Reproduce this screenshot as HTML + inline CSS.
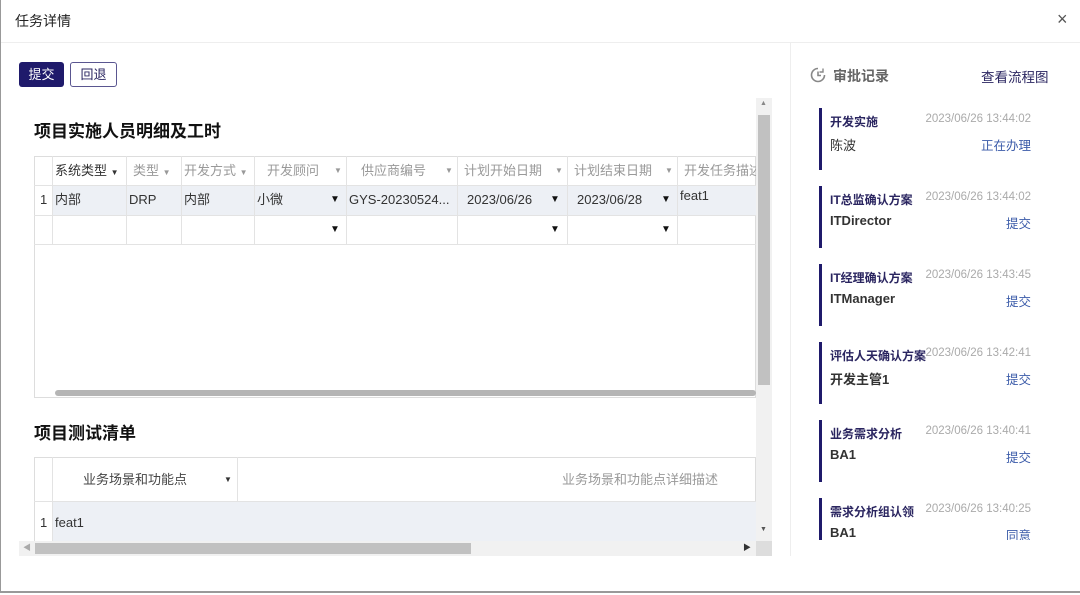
<!DOCTYPE html>
<html><head><meta charset="utf-8"><style>
*{box-sizing:border-box;margin:0;padding:0}
body{width:1080px;height:595px;background:#fff;font-family:"Liberation Sans","Noto Sans CJK SC",sans-serif;position:relative;overflow:hidden;color:#333}
.a{position:absolute}
.frame{left:0;top:0;width:1080px;height:593px;border-left:1px solid #999;border-bottom:2px solid #999}
.t{font-size:13px;white-space:nowrap}
.cell{position:absolute;font-size:13px;white-space:nowrap;line-height:29px}
.hd{color:#999}
.vl{position:absolute;width:1px;background:#e3e3e3}
.hz{position:absolute;height:1px;background:#e3e3e3}
.tri{font-size:10px;color:#111}
.rec{position:absolute;left:819px;width:212px;height:62px;border-left:3px solid #1f1a6b}
.rt{position:absolute;left:8px;top:5px;font-size:12px;font-weight:bold;color:#2a2560}
.rd{position:absolute;right:0;top:5px;font-size:11.5px;color:#aaa}
.rn{position:absolute;left:8px;top:27px;font-size:13px;font-weight:bold;color:#333}
.rs{position:absolute;right:0;top:27px;font-size:12.5px;color:#3b5ba9}
</style></head><body>
<div class="a frame"></div>
<div class="a t" style="left:15px;top:11px;font-size:14px;color:#222">任务详情</div>
<div class="a" style="left:1057px;top:9px;font-size:18px;color:#555">×</div>
<div class="a" style="left:1px;top:42px;width:1079px;height:1px;background:#eee"></div>
<div class="a" style="left:19px;top:62px;width:45px;height:25px;background:#1f1a6b;border-radius:3px;color:#fff;font-size:13px;text-align:center;line-height:25px">提交</div>
<div class="a" style="left:70px;top:62px;width:47px;height:25px;border:1px solid #5a5690;border-radius:3px;color:#2a2560;font-size:13px;text-align:center;line-height:23px">回退</div>

<div class="a t" style="left:34px;top:117px;font-size:17px;font-weight:bold;color:#111">项目实施人员明细及工时</div>
<div class="a" style="left:34px;top:156px;width:722px;height:242px;border:1px solid #ddd"></div>
<div class="a" style="left:52px;top:185px;width:704px;height:30px;background:#edf0f5"></div>
<div class="hz" style="left:34px;top:185px;width:722px"></div>
<div class="hz" style="left:34px;top:215px;width:722px"></div>
<div class="hz" style="left:34px;top:244px;width:722px"></div>
<div class="vl" style="left:52px;top:156px;height:88px"></div>
<div class="vl" style="left:126px;top:156px;height:88px"></div>
<div class="vl" style="left:181px;top:156px;height:88px"></div>
<div class="vl" style="left:254px;top:156px;height:88px"></div>
<div class="vl" style="left:346px;top:156px;height:88px"></div>
<div class="vl" style="left:457px;top:156px;height:88px"></div>
<div class="vl" style="left:567px;top:156px;height:88px"></div>
<div class="vl" style="left:677px;top:156px;height:88px"></div>
<div class="cell" style="left:55px;top:156px;color:#333">系统类型 <span style="font-size:8px">▼</span></div>
<div class="cell hd" style="left:133px;top:156px">类型 <span style="font-size:8px">▼</span></div>
<div class="cell hd" style="left:184px;top:156px">开发方式 <span style="font-size:8px">▼</span></div>
<div class="cell hd" style="left:267px;top:156px">开发顾问</div><div class="cell hd" style="left:334px;top:156px;font-size:8px">▼</div>
<div class="cell hd" style="left:361px;top:156px">供应商编号</div><div class="cell hd" style="left:445px;top:156px;font-size:8px">▼</div>
<div class="cell hd" style="left:464px;top:156px">计划开始日期</div><div class="cell hd" style="left:555px;top:156px;font-size:8px">▼</div>
<div class="cell hd" style="left:574px;top:156px">计划结束日期</div><div class="cell hd" style="left:665px;top:156px;font-size:8px">▼</div>
<div class="cell hd" style="left:684px;top:156px;width:72px;overflow:hidden">开发任务描述</div>
<div class="cell" style="left:40px;top:185px">1</div>
<div class="cell" style="left:55px;top:185px">内部</div>
<div class="cell" style="left:129px;top:185px">DRP</div>
<div class="cell" style="left:184px;top:185px">内部</div>
<div class="cell" style="left:257px;top:185px">小微</div><div class="cell tri" style="left:330px;top:185px">▼</div>
<div class="cell" style="left:349px;top:185px">GYS-20230524...</div>
<div class="cell" style="left:467px;top:185px">2023/06/26</div><div class="cell tri" style="left:550px;top:185px">▼</div>
<div class="cell" style="left:577px;top:185px">2023/06/28</div><div class="cell tri" style="left:661px;top:185px">▼</div>
<div class="cell" style="left:680px;top:181px">feat1</div>
<div class="cell tri" style="left:330px;top:215px">▼</div>
<div class="cell tri" style="left:550px;top:215px">▼</div>
<div class="cell tri" style="left:661px;top:215px">▼</div>
<div class="a" style="left:55px;top:390px;width:701px;height:6px;background:#b5b5b5;border-radius:3px"></div>

<div class="a t" style="left:34px;top:419px;font-size:17px;font-weight:bold;color:#111">项目测试清单</div>
<div class="a" style="left:34px;top:457px;width:722px;height:84px;border:1px solid #ddd;border-bottom:none"></div>
<div class="a" style="left:52px;top:501px;width:704px;height:40px;background:#edf0f5"></div>
<div class="hz" style="left:34px;top:501px;width:722px"></div>
<div class="vl" style="left:52px;top:457px;height:84px"></div>
<div class="vl" style="left:237px;top:457px;height:44px"></div>
<div class="cell" style="left:83px;top:465px;color:#444">业务场景和功能点</div>
<div class="cell" style="left:224px;top:465px;font-size:8px">▼</div>
<div class="cell hd" style="left:562px;top:465px">业务场景和功能点详细描述</div>
<div class="cell" style="left:40px;top:508px">1</div>
<div class="cell" style="left:55px;top:508px">feat1</div>

<div class="a" style="left:756px;top:98px;width:16px;height:443px;background:#f1f1f1"></div>
<div class="a" style="left:758px;top:115px;width:12px;height:270px;background:#c1c1c1"></div>
<div class="a" style="left:760px;top:100px;font-size:7px;color:#888">▲</div>
<div class="a" style="left:760px;top:526px;font-size:7px;color:#555">▼</div>
<div class="a" style="left:19px;top:541px;width:737px;height:15px;background:#f1f1f1"></div>
<div class="a" style="left:756px;top:541px;width:16px;height:15px;background:#ddd"></div>
<div class="a" style="left:35px;top:543px;width:436px;height:11px;background:#c1c1c1"></div>
<div class="a" style="left:23px;top:542px;font-size:8px;color:#aaa">◀</div>
<div class="a" style="left:743px;top:542px;font-size:8px;color:#333">▶</div>

<div class="a" style="left:790px;top:43px;width:1px;height:513px;background:#eee"></div>
<svg class="a" style="left:809px;top:66px" width="18" height="18" viewBox="0 0 18 18"><path d="M15.5 9A6.5 6.5 0 1 1 9 2.5" fill="none" stroke="#888" stroke-width="1.6"/><path d="M9 5.5V9.5H12" fill="none" stroke="#888" stroke-width="1.6"/><path d="M14 2.5v3.5h-3.5" fill="none" stroke="#888" stroke-width="1.4"/></svg>
<div class="a t" style="left:833px;top:66px;font-size:14px;font-weight:bold;color:#666">审批记录</div>
<div class="a t" style="left:981px;top:66px;font-size:13.5px;color:#2a2560">查看流程图</div>
<div class="a" style="left:791px;top:98px;width:289px;height:442px;overflow:hidden">
<div class="rec" style="left:28px;top:10px"><div class="rt">开发实施</div><div class="rd">2023/06/26 13:44:02</div><div class="rn" style="font-weight:normal">陈波</div><div class="rs">正在办理</div></div>
<div class="rec" style="left:28px;top:88px"><div class="rt">IT总监确认方案</div><div class="rd">2023/06/26 13:44:02</div><div class="rn">ITDirector</div><div class="rs">提交</div></div>
<div class="rec" style="left:28px;top:166px"><div class="rt">IT经理确认方案</div><div class="rd">2023/06/26 13:43:45</div><div class="rn">ITManager</div><div class="rs">提交</div></div>
<div class="rec" style="left:28px;top:244px"><div class="rt">评估人天确认方案</div><div class="rd">2023/06/26 13:42:41</div><div class="rn">开发主管1</div><div class="rs">提交</div></div>
<div class="rec" style="left:28px;top:322px"><div class="rt">业务需求分析</div><div class="rd">2023/06/26 13:40:41</div><div class="rn">BA1</div><div class="rs">提交</div></div>
<div class="rec" style="left:28px;top:400px"><div class="rt">需求分析组认领</div><div class="rd">2023/06/26 13:40:25</div><div class="rn">BA1</div><div class="rs">同意</div></div>
</div>
</body></html>
